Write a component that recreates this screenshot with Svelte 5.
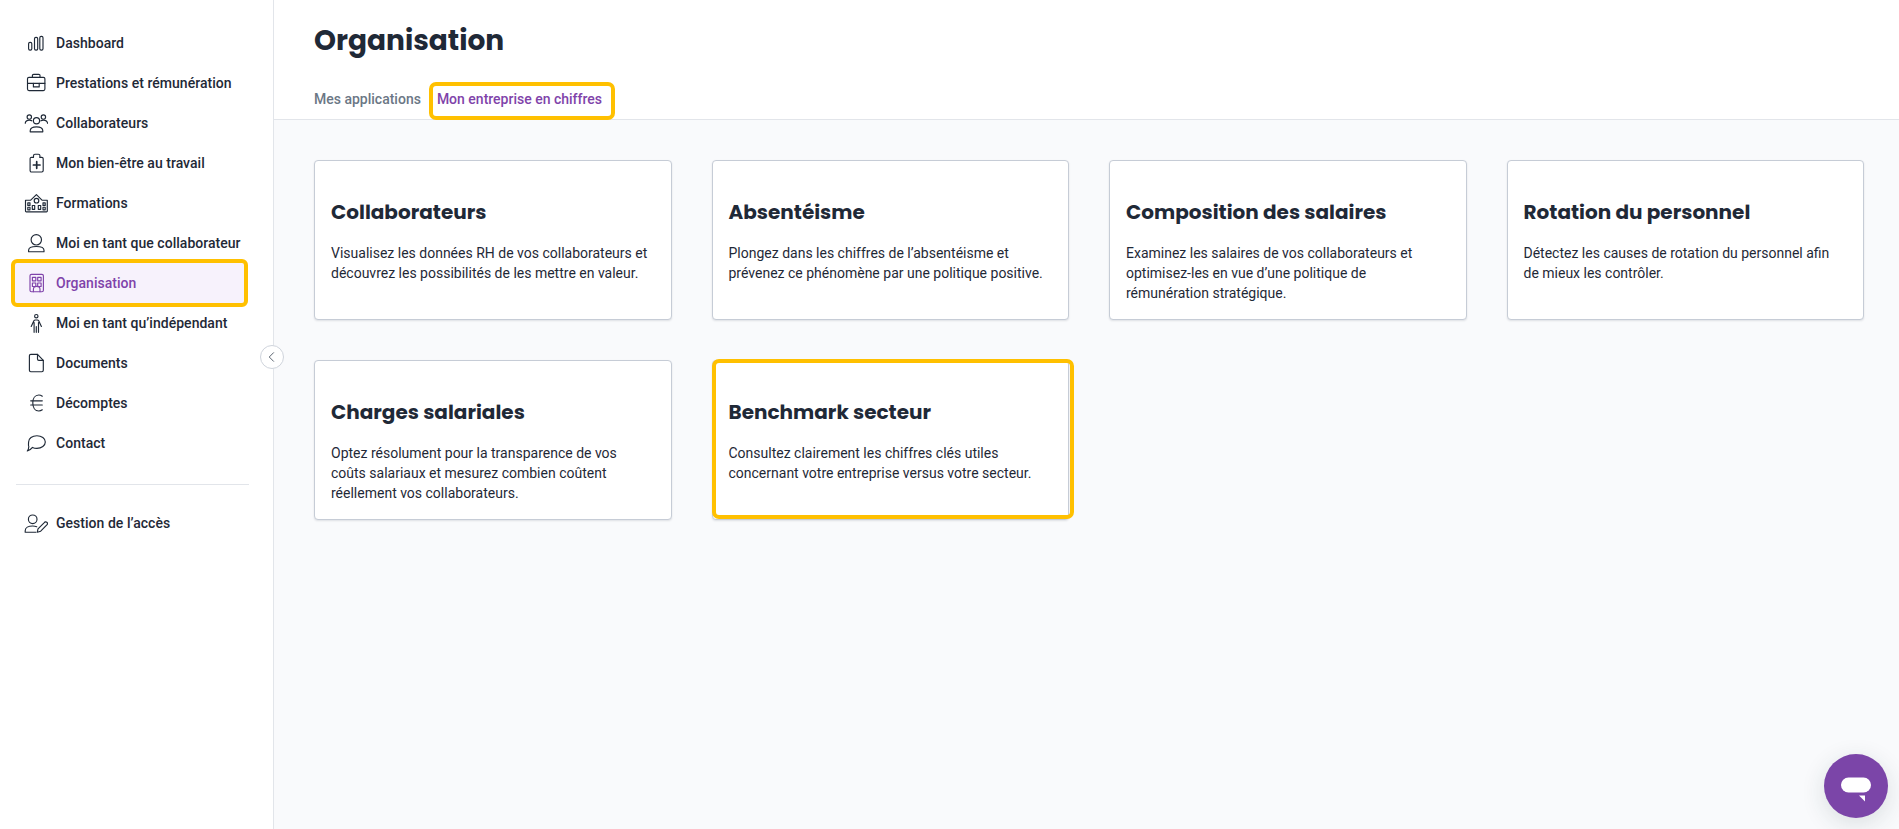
<script>
  const navItems = [
    { id: 'dash', label: 'Dashboard' },
    { id: 'brief', label: 'Prestations et rémunération' },
    { id: 'team', label: 'Collaborateurs' },
    { id: 'well', label: 'Mon bien-être au travail' },
    { id: 'school', label: 'Formations' },
    { id: 'user', label: 'Moi en tant que collaborateur' },
    { id: 'org', label: 'Organisation', active: true },
    { id: 'person', label: 'Moi en tant qu’indépendant' },
    { id: 'doc', label: 'Documents' },
    { id: 'euro', label: 'Décomptes' },
    { id: 'chat', label: 'Contact' }
  ];
  const cards = [
    { title: 'Collaborateurs', text: 'Visualisez les données RH de vos collaborateurs et découvrez les possibilités de les mettre en valeur.' },
    { title: 'Absentéisme', text: 'Plongez dans les chiffres de l’absentéisme et prévenez ce phénomène par une politique positive.' },
    { title: 'Composition des salaires', text: 'Examinez les salaires de vos collaborateurs et optimisez-les en vue d’une politique de rémunération stratégique.' },
    { title: 'Rotation du personnel', text: 'Détectez les causes de rotation du personnel afin de mieux les contrôler.' },
    { title: 'Charges salariales', text: 'Optez résolument pour la transparence de vos coûts salariaux et mesurez combien coûtent réellement vos collaborateurs.' },
    { title: 'Benchmark secteur', text: 'Consultez clairement les chiffres clés utiles concernant votre entreprise versus votre secteur.', marked: true }
  ];
</script>

{#snippet icon(id)}
  <svg class="ico" viewBox="0 0 24 24" fill="none" stroke="currentColor" stroke-width="1.15" stroke-linejoin="round" stroke-linecap="round" aria-hidden="true">
    {#if id === 'dash'}
      <rect x="4.6" y="11.300" width="3.200" height="7.800" rx="1.400" />
      <rect x="10.500" y="6.300" width="3.200" height="12.800" rx="1.400" />
      <rect x="15.800" y="5.300" width="3.200" height="13.800" rx="1.400" />
    {:else if id === 'brief'}
      <rect x="3.500" y="6.300" width="17.400" height="13.300" rx="1.500" />
      <path d="M8.400 6.300V4.600a1.300 1.300 0 0 1 1.300-1.300h5a1.300 1.300 0 0 1 1.300 1.300v1.700M3.500 12.300h5.900M15.200 12.300h5.700" />
      <rect x="9.400" y="12.300" width="5.800" height="3.600" />
    {:else if id === 'team'}
      <circle cx="12.500" cy="9.700" r="3.100" />
      <path d="M6.200 20.800v-1c0-2.600 2.700-4 6.300-4s6.300 1.400 6.300 4v1z" />
      <circle cx="5.300" cy="6" r="2.200" />
      <circle cx="19.400" cy="6" r="2.200" />
      <path d="M1.200 12.300c.3-2 2-3.200 4.100-3.200 1 0 1.800.2 2.500.7M23.600 12.300c-.3-2-2-3.200-4.200-3.200-1 0-1.800.2-2.500.7" />
    {:else if id === 'well'}
      <path d="M9.300 6.300H7.500A1.400 1.400 0 0 0 6.100 7.700v11.900A1.400 1.400 0 0 0 7.500 21h10.300a1.400 1.400 0 0 0 1.400-1.400V7.700a1.400 1.400 0 0 0-1.400-1.400H16" />
      <path d="M9.500 6.300V4.700a1.500 1.500 0 0 1 1.500-1.500h3.400A1.500 1.500 0 0 1 15.900 4.700v1.600" />
      <path d="M12.700 10.700v6.600M9.400 14h6.600" stroke-width="1.700" />
    {:else if id === 'school'}
      <path d="M1.500 9.200h5.200L12.400 3.600l5.600 5.600h5.300V20a.8.8 0 0 1-.8.800H2.300a.8.8 0 0 1-.8-.8z" />
      <circle cx="12.500" cy="9.700" r="2.300" />
      <rect x="3.800" y="11.800" width="2.200" height="2.600" /><rect x="3.800" y="16.200" width="2.200" height="2.600" />
      <rect x="19" y="11.800" width="2.200" height="2.600" /><rect x="19" y="16.200" width="2.200" height="2.600" />
      <rect x="8.300" y="14.500" width="2.400" height="3.800" /><rect x="14.300" y="14.500" width="2.400" height="3.800" />
    {:else if id === 'user'}
      <circle cx="12.300" cy="8.800" r="5.200" />
      <path d="M4.600 20.700v-1.500c0-2.400 3.300-3.700 7.700-3.700s7.700 1.300 7.700 3.700v1.500z" />
    {:else if id === 'org'}
      <rect x="6" y="3.300" width="13.400" height="17.400" rx="1.500" />
      <rect x="8.400" y="6.300" width="3.400" height="3.500" /><rect x="13.700" y="6.300" width="3.400" height="3.500" />
      <rect x="8.400" y="12" width="3.400" height="3.500" /><rect x="13.700" y="12" width="3.400" height="3.500" />
      <path d="M9.400 20.700v-2.300a3.300 3 0 0 1 6.600 0v2.300" />
    {:else if id === 'person'}
      <circle cx="12.300" cy="5.200" r="1.700" />
      <path d="M7.200 15.500l2.700-5.700a1.500 1.500 0 0 1 1.300-.8h2.200a1.500 1.500 0 0 1 1.300.8l2.700 5.700M10.100 11.500v9.800M14.500 11.500v9.800M12.300 15.500v5.800" />
    {:else if id === 'doc'}
      <path d="M6.800 3.300h6.700l5.800 6v10a1.400 1.400 0 0 1-1.400 1.400H6.800a1.400 1.400 0 0 1-1.400-1.400V4.700a1.400 1.400 0 0 1 1.400-1.400z" />
      <path d="M13.500 3.300v4.700a1.300 1.300 0 0 0 1.300 1.300h4.500" />
    {:else if id === 'euro'}
      <path d="M18.300 5.200c-1-.7-2.200-1.200-3.500-1.200-3.800 0-6 3.600-6 8s2.200 8 6 8c1.300 0 2.500-.5 3.500-1.200M6.700 9.800h11.600M6.700 14h11.600" />
    {:else if id === 'chat'}
      <path d="M12.900 4.700c4.700 0 8.400 2.800 8.400 6.300s-3.700 6.300-8.400 6.300c-1.600 0-3.100-.3-4.400-.9-1.300 1.700-3 3-5.200 3.600 1-1.300 1.500-2.900 1.500-4.500-.7-1.200-.2-2.300-.2-4.500 0-3.500 3.600-6.300 8.300-6.300z" />
    {:else if id === 'access'}
      <circle cx="8.700" cy="8.300" r="4.300" />
      <path d="M1.200 21.200v-1.500c0-2.700 3.100-4.700 7.500-4.700 1.500 0 2.800.2 4 .7M1.200 21.200H12" />
      <path d="M13.300 21.200l.7-3.300 6.300-6.300a1.600 1.600 0 0 1 2.800 2.100l-6.400 6.500z" />
    {/if}
  </svg>
{/snippet}

<div class="shell">
  <aside class="side">
    <nav class="nav">
      {#each navItems as item}
        <a class="item" class:active={item.active} href="#top">
          {@render icon(item.id)}
          <span>{item.label}</span>
        </a>
      {/each}
    </nav>
    <hr class="rule" />
    <a class="item" href="#top">
      {@render icon('access')}
      <span>Gestion de l’accès</span>
    </a>
    <button class="collapse" aria-label="Réduire">
      <svg viewBox="0 0 24 24" width="24" height="24" fill="none" stroke="#4b5563" stroke-width="1"><path d="M14 7l-5 5 5 5" /></svg>
    </button>
  </aside>

  <main class="main">
    <header class="head">
      <h1>Organisation</h1>
      <div class="tabs">
        <span class="tab">Mes applications</span>
        <span class="tab current">Mon entreprise en chiffres</span>
      </div>
    </header>
    <section class="grid">
      {#each cards as card}
        <article class="card" class:marked={card.marked}>
          <h2>{card.title}</h2>
          <p>{card.text}</p>
        </article>
      {/each}
    </section>
  </main>

  <button class="bubble" aria-label="Chat">
    <svg viewBox="0 0 64 64" width="64" height="64"><rect x="17" y="23.500" width="30" height="15" rx="7.500" fill="#fff" /><path d="M35 41.500h6v6z" fill="#fff" /></svg>
  </button>
</div>

<style>
  :global(body) { margin: 0; background: #f9fafc; }
  .shell { display: flex; min-height: 829px; font-family: Roboto, "Liberation Sans", sans-serif; color: #1f2937; position: relative; overflow: hidden; }
  .side { width: 273px; flex: none; background: #fff; border-right: 1px solid #e2e5ea; padding-top: 23px; box-sizing: content-box; position: relative; }
  .nav { display: flex; flex-direction: column; }
  .item { display: flex; align-items: center; gap: 8px; height: 40px; margin: 0 25px 0 16px; padding-left: 8px; color: #1f2937; text-decoration: none; font-size: 14px; font-weight: 500; letter-spacing: 0.03px; position: relative; white-space: nowrap; }
  .ico { width: 24px; height: 24px; flex: none; }
  .item.active { color: #7f43aa; background: #f7f2fc; margin: 0 25px 0 15px; padding-left: 9px; }
  .item.active::after { content: ''; position: absolute; inset: -4px 0 -4px -4px; border: 4px solid #ffc000; border-radius: 6px; pointer-events: none; }
  .rule { border: 0; border-top: 1px solid #e2e5ea; margin: 21px 24px 18px 16px; }
  .collapse { position: absolute; top: 345px; right: -11px; width: 24px; height: 24px; padding: 0; border-radius: 50%; border: 1px solid #cfd4dc; background: #fff; display: flex; align-items: center; justify-content: center; }
  .main { flex: 1; min-width: 0; }
  .head { background: #fff; border-bottom: 1px solid #e2e5ea; height: 119px; padding: 0 40px; box-sizing: content-box; }
  h1 { margin: 0; padding-top: 22px; font-family: Poppins, Inter, sans-serif; font-size: 28px; line-height: 38px; font-weight: 700; color: #1f2937; }
  .tabs { display: flex; gap: 16px; margin-top: 29px; }
  .tab { font-size: 14px; font-weight: 500; line-height: 20px; color: #6b7785; position: relative; white-space: nowrap; }
  .tab.current { color: #7f43aa; }
  .tab.current::after { content: ''; position: absolute; inset: -7px -13px -11px -8px; border: 4px solid #ffc000; border-radius: 7px; pointer-events: none; }
  .grid { display: grid; grid-template-columns: repeat(4, 1fr); gap: 40px; padding: 40px 35px 0 40px; }
  .card { background: #fff; border: 1px solid #c6ccd6; border-radius: 4px; box-shadow: 0 1px 2px rgba(31, 41, 55, 0.12); height: 160px; box-sizing: border-box; padding: 36px 16px 0; position: relative; }
  .card.marked::after { content: ''; position: absolute; inset: -2px -6px 0 -1px; border: 4px solid #ffc000; border-radius: 7px; pointer-events: none; }
  h2 { margin: 0; font-family: Poppins, Inter, sans-serif; font-size: 20px; line-height: 30px; font-weight: 700; color: #1f2937; }
  p { margin: 16px 0 0; font-size: 14px; line-height: 20px; color: #1f2937; }
  .bubble { position: absolute; left: 1824px; top: 754px; width: 64px; height: 64px; padding: 0; border: 0; border-radius: 50%; background: #7b45a8; box-shadow: 0 6px 24px rgba(31, 60, 60, 0.14); }
  .bubble svg { display: block; }
</style>
